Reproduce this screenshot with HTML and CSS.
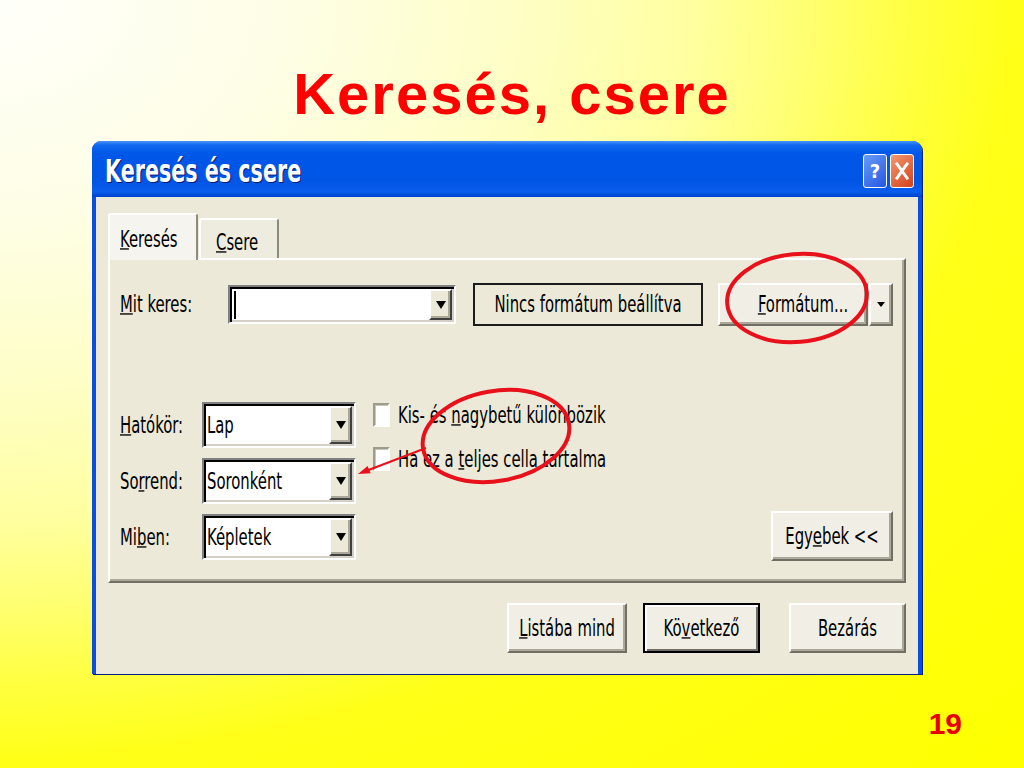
FILE: index.html
```html
<!DOCTYPE html>
<html lang="hu">
<head>
  <meta charset="UTF-8">
  <title>Keresés, csere</title>
  <link rel="stylesheet" href="styles.css">
</head>
<body>

  <div class="slide">
    <h1 class="slide-title">Keresés, csere</h1>

    <div class="dialog">
      <div class="titlebar">
        <span class="t titlebar-text">Keresés és csere</span>
        <div class="titlebar-btns">
          <span class="tb-btn tb-help">?</span>
          <span class="tb-btn tb-close">
            <svg width="14" height="18" viewBox="0 0 14 18">
              <path d="M2 2 L12 16 M12 2 L2 16" stroke="#fff" stroke-width="3" stroke-linecap="square"/>
            </svg>
          </span>
        </div>
      </div>

      <div class="client">
        <div class="tabs">
          <div class="tab tab-active"><span class="t"><u>K</u>eresés</span></div>
          <div class="tab tab-other"><span class="t"><u>C</u>sere</span></div>
        </div>

        <div class="panel">
          <div class="find-row">
            <span class="lbl lbl-find"><span class="t"><u>M</u>it keres:</span></span>
            <div class="combo combo-find">
              <span class="combo-value"><i class="caret"></i></span>
              <span class="combo-btn raised"><i class="tri"></i></span>
            </div>
            <div class="fmt-preview"><span class="t">Nincs formátum beállítva</span></div>
            <div class="split-btn">
              <span class="btn fmt-btn"><span class="t"><u>F</u>ormátum...</span></span>
              <span class="btn fmt-arrow"><i class="tri tri-small"></i></span>
            </div>
          </div>

          <div class="options">
            <div class="opt-grid">
              <span class="lbl"><span class="t"><u>H</u>atókör:</span></span>
              <div class="combo combo-opt">
                <span class="combo-value"><span class="t">Lap</span></span>
                <span class="combo-btn raised"><i class="tri"></i></span>
              </div>
              <span class="lbl"><span class="t">So<u>r</u>rend:</span></span>
              <div class="combo combo-opt">
                <span class="combo-value"><span class="t">Soronként</span></span>
                <span class="combo-btn raised"><i class="tri"></i></span>
              </div>
              <span class="lbl"><span class="t">Mi<u>b</u>en:</span></span>
              <div class="combo combo-opt">
                <span class="combo-value"><span class="t">Képletek</span></span>
                <span class="combo-btn raised"><i class="tri"></i></span>
              </div>
            </div>

            <div class="checks">
              <label class="check"><span class="cb"></span><span class="t">Kis- és <u>n</u>agybetű különbözik</span></label>
              <label class="check"><span class="cb"></span><span class="t">Ha ez a <u>t</u>eljes cella tartalma</span></label>
            </div>

            <span class="btn more-btn"><span class="t">Egy<u>e</u>bek &lt;&lt;</span></span>
          </div>
        </div>

        <div class="actions">
          <span class="btn act-list"><span class="t"><u>L</u>istába mind</span></span>
          <span class="btn btn-default act-next"><span class="t">Kö<u>v</u>etkező</span></span>
          <span class="btn act-close"><span class="t">Bezárás</span></span>
        </div>
      </div>
    </div>

    <div class="page-num">19</div>

    <!-- red markings drawn over the screenshot -->
    <svg class="marks" width="1024" height="768" viewBox="0 0 1024 768">
      <ellipse cx="797" cy="298" rx="70" ry="44" transform="rotate(-5 797 298)" class="ring"/>
      <ellipse cx="496" cy="436" rx="74" ry="45" transform="rotate(-10 496 436)" class="ring"/>
      <line x1="426" y1="448" x2="366" y2="471" class="pointer"/>
      <polygon points="358,474 370.6,473.3 367.6,465.9" class="pointer-head"/>
    </svg>
  </div>

</body>
</html>
```

FILE: styles.css
```css
* {
  box-sizing: border-box;
}
body {
  margin: 0;
}
.slide {
  position: relative;
  width: 1024px;
  height: 768px;
  padding-top: 65px;
  overflow: hidden;
  font-family: "Liberation Sans", Arial, sans-serif;
  background: radial-gradient(ellipse at top left, #fffffa 0%, #fefee6 20%, #fefec8 35%, #ffffa0 48%, #ffff70 56%, #ffff40 63%, #ffff18 70%, #ffff00 100%);
}
.slide-title {
  margin: 0 0 18px;
  font-size: 58px;
  line-height: 58px;
  font-weight: bold;
  color: #ff0000;
  text-align: center;
  letter-spacing: 2px;
}

/* window */
.dialog {
  width: 830px;
  margin-left: 92px;
  background: #0a4fe0;
  border-radius: 9px 9px 0 0;
  box-shadow: 1px 1px 0 #00207f;
  font-family: "DejaVu Sans Condensed", "DejaVu Sans", sans-serif;
  font-stretch: condensed;
  font-size: 16.5px;
  color: #000;
}
/* the screenshot is stretched vertically, so is the text */
.t {
  display: inline-block;
  transform: scaleY(1.35);
  white-space: nowrap;
}
.titlebar {
  height: 56px;
  display: flex;
  align-items: center;
  padding: 3px 8px 0 13px;
  border-radius: 9px 9px 0 0;
  background: linear-gradient(to bottom, #4a95fa 0px, #1168f0 4px, #0058e8 12px, #0055e5 40px, #0a5ced 51px, #0040c8 56px);
}
.titlebar-text {
  font-size: 23px;
  font-weight: bold;
  color: #fff;
  text-shadow: 1px 1px 0 #0a1c6e;
}
.titlebar-btns {
  margin-left: auto;
  display: flex;
  gap: 3px;
}
.tb-btn {
  width: 24px;
  height: 34px;
  border: 1px solid #fff;
  border-radius: 3px;
  display: flex;
  align-items: center;
  justify-content: center;
  color: #fff;
  font-weight: bold;
  font-size: 20px;
}
.tb-help {
  background: linear-gradient(135deg, #6a9cf8, #2456e2);
}
.tb-close {
  background: linear-gradient(135deg, #f29a70, #d5401a);
}
.client {
  margin: 0 4px 5px;
  height: 477px;
  background: #ece9d8;
  padding: 16px 12px 0;
}

/* tabs */
.tabs {
  display: flex;
  align-items: flex-end;
  height: 45px;
  position: relative;
  z-index: 1;
}
.tab {
  height: 40px;
  display: flex;
  align-items: center;
  border: 2px solid;
  border-bottom: 0;
  border-color: #fff #8d8a7e #fff #fff;
  border-radius: 3px 3px 0 0;
  background: #eeebdf;
}
.tab-active {
  width: 90px;
  height: 47px;
  margin-bottom: -2px;
  padding: 4px 0 0 10px;
  background: #f5f4ee;
}
.tab-other {
  width: 80px;
  margin-left: 1px;
  padding: 6px 0 0 15px;
}
.panel {
  height: 325px;
  border: 2px solid;
  border-color: #fff #716f64 #716f64 #fff;
  box-shadow: inset -2px -2px 0 #aca899;
  padding: 23px 11px 0 10px;
}

/* controls */
.lbl {
  white-space: nowrap;
}
.lbl-find {
  width: 108px;
}
.find-row {
  display: flex;
  align-items: center;
  height: 43px;
}
.combo {
  display: flex;
  align-items: center;
  background: #fff;
  border: 2px solid;
  border-color: #808080 #fff #fff #808080;
  box-shadow: inset 2px 2px 0 #000, inset -2px -2px 0 #d4d0c8;
}
.combo-value {
  flex: 1;
  padding-left: 3px;
  display: flex;
  align-items: center;
}
.combo-find {
  width: 228px;
  height: 39px;
}
.combo-opt {
  width: 154px;
  height: 46px;
}
.caret {
  width: 2px;
  height: 28px;
  background: #000;
  margin-left: 1px;
}
.combo-btn {
  align-self: stretch;
  width: 23px;
  margin: 2px 2px 2px 0;
  display: flex;
  align-items: center;
  justify-content: center;
}
.raised {
  background: #ece9d8;
  border: 2px solid;
  border-color: #fff #404040 #404040 #fff;
  box-shadow: inset -2px -2px 0 #aca899;
}
.tri {
  width: 0;
  height: 0;
  border-left: 5px solid transparent;
  border-right: 5px solid transparent;
  border-top: 8px solid #000;
}
.tri-small {
  border-left-width: 4px;
  border-right-width: 4px;
  border-top-width: 5px;
}
.fmt-preview {
  width: 230px;
  height: 43px;
  margin-left: 17px;
  border: 2px solid #1c1c1c;
  display: flex;
  align-items: center;
  justify-content: center;
}
.split-btn {
  display: flex;
  gap: 1px;
  margin-left: 15px;
}
.btn {
  display: flex;
  align-items: center;
  justify-content: center;
  background: #f0eee5;
  border: 2px solid;
  border-color: #fff #716f64 #716f64 #fff;
  box-shadow: inset -2px -2px 0 #aca899;
  white-space: nowrap;
}
.fmt-btn {
  width: 150px;
  height: 43px;
  padding-left: 20px;
}
.fmt-arrow {
  width: 24px;
  height: 43px;
}
.options {
  display: flex;
  align-items: flex-start;
  margin-top: 76px;
}
.opt-grid {
  display: grid;
  grid-template-columns: 82px 154px;
  row-gap: 10px;
  align-items: center;
}
.checks {
  display: flex;
  flex-direction: column;
  gap: 20px;
  margin: 1px 0 0 17px;
}
.check {
  display: flex;
  align-items: center;
  gap: 8px;
  height: 24px;
}
.cb {
  width: 17px;
  height: 24px;
  background: #fff;
  border: 2px solid;
  border-color: #9d9a8e #fff #fff #9d9a8e;
  box-shadow: inset 1px 1px 0 #c9c6b8;
}
.more-btn {
  width: 122px;
  height: 50px;
  margin: 0 0 -1px auto;
  align-self: flex-end;
}
.actions {
  display: flex;
  justify-content: flex-end;
  margin-top: 20px;
}
.actions .btn {
  height: 50px;
}
.act-list {
  width: 120px;
}
.act-next {
  width: 117px;
  margin-left: 16px;
}
.act-close {
  width: 117px;
  margin-left: 29px;
}
.btn-default {
  border-color: #000;
  box-shadow: inset 2px 2px 0 #fff, inset -2px -2px 0 #716f64;
}

.page-num {
  margin-top: 35px;
  padding-right: 62px;
  text-align: right;
  font-size: 30px;
  line-height: 30px;
  font-weight: bold;
  color: #e80000;
}

/* annotations */
.marks {
  position: absolute;
  left: 0;
  top: 0;
  pointer-events: none;
}
.ring {
  fill: none;
  stroke: #e8101a;
  stroke-width: 4;
}
.pointer {
  stroke: #e8101a;
  stroke-width: 2;
}
.pointer-head {
  fill: #e8101a;
}
```
